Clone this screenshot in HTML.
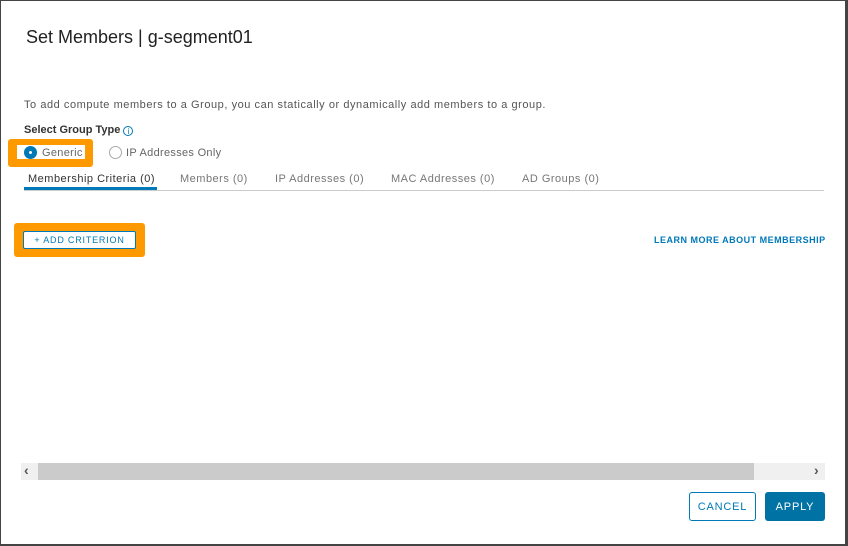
<!DOCTYPE html>
<html><head><style>
*{margin:0;padding:0;box-sizing:border-box}
body{width:848px;height:546px;background:#444;font-family:"Liberation Sans",sans-serif;position:relative;overflow:hidden}
.m{position:absolute;left:1px;top:1px;width:844px;height:543px;background:#fff}
.a{position:absolute;white-space:nowrap}
.b{display:flex;align-items:center;justify-content:center}
</style></head><body>
<div class="m"></div>
<div class="a" style="left:26px;top:27px;font-size:18px;color:#222">Set Members | g-segment01</div>
<div class="a" style="left:24px;top:99px;font-size:11px;letter-spacing:.55px;color:#555">To add compute members to a Group, you can statically or dynamically add members to a group.</div>
<div class="a" style="left:24px;top:124px;font-size:11px;font-weight:bold;color:#333">Select Group Type <span style="display:inline-block;width:10px;height:10px;border:1px solid #0079b8;border-radius:50%;color:#0079b8;font-size:8px;text-align:center;line-height:9px;font-weight:normal;vertical-align:-1px">i</span></div>
<div class="a" style="left:8px;top:139px;width:85px;height:28px;background:#f90;border-radius:3px"></div>
<div class="a" style="left:17px;top:145px;width:68px;height:14px;background:#fff"></div>
<div class="a" style="left:24px;top:146px;width:13px;height:13px;border-radius:50%;background:#0079b8"></div>
<div class="a" style="left:29px;top:151px;width:3px;height:3px;border-radius:50%;background:#fff"></div>
<div class="a" style="left:42px;top:147px;font-size:11px;letter-spacing:.3px;color:#666">Generic</div>
<div class="a" style="left:109px;top:146px;width:13px;height:13px;border-radius:50%;border:1px solid #aaa"></div>
<div class="a" style="left:126px;top:147px;font-size:11px;letter-spacing:.3px;color:#666">IP Addresses Only</div>
<div class="a" style="left:24px;top:190px;width:800px;height:1px;background:#ccc"></div>
<div class="a" style="left:24px;top:187px;width:133px;height:3px;background:#0079b8"></div>
<div class="a" style="left:28px;top:173px;font-size:11px;letter-spacing:.5px;color:#333">Membership Criteria (0)</div>
<div class="a" style="left:180px;top:173px;font-size:11px;letter-spacing:.5px;color:#777">Members (0)</div>
<div class="a" style="left:275px;top:173px;font-size:11px;letter-spacing:.5px;color:#777">IP Addresses (0)</div>
<div class="a" style="left:391px;top:173px;font-size:11px;letter-spacing:.5px;color:#777">MAC Addresses (0)</div>
<div class="a" style="left:522px;top:173px;font-size:11px;letter-spacing:.5px;color:#777">AD Groups (0)</div>
<div class="a" style="left:14px;top:223px;width:131px;height:34px;background:#f90;border-radius:3px"></div>
<div class="a b" style="left:23px;top:231px;width:113px;height:18px;background:#fff;border:1px solid #0079b8;border-radius:2px;color:#0079b8;font-size:9px;letter-spacing:.8px">+ ADD CRITERION</div>
<div class="a" style="left:654px;top:235px;font-size:9px;color:#0079b8;letter-spacing:.5px;font-weight:bold">LEARN MORE ABOUT MEMBERSHIP</div>
<div class="a" style="left:21px;top:463px;width:804px;height:17px;background:#f0f0f0"></div>
<div class="a" style="left:38px;top:463px;width:716px;height:17px;background:#cbcbcb"></div>
<div class="a" style="left:24px;top:462px;font-size:14px;font-weight:bold;color:#555;line-height:17px">&#8249;</div>
<div class="a" style="left:814px;top:462px;font-size:14px;font-weight:bold;color:#555;line-height:17px">&#8250;</div>
<div class="a b" style="left:689px;top:492px;width:67px;height:29px;border:1px solid #0079b8;border-radius:3px;color:#0079b8;font-size:11px;letter-spacing:.8px">CANCEL</div>
<div class="a b" style="left:765px;top:492px;width:60px;height:29px;background:#0072a3;border-radius:3px;color:#fff;font-size:11px;letter-spacing:.8px">APPLY</div>
</body></html>
